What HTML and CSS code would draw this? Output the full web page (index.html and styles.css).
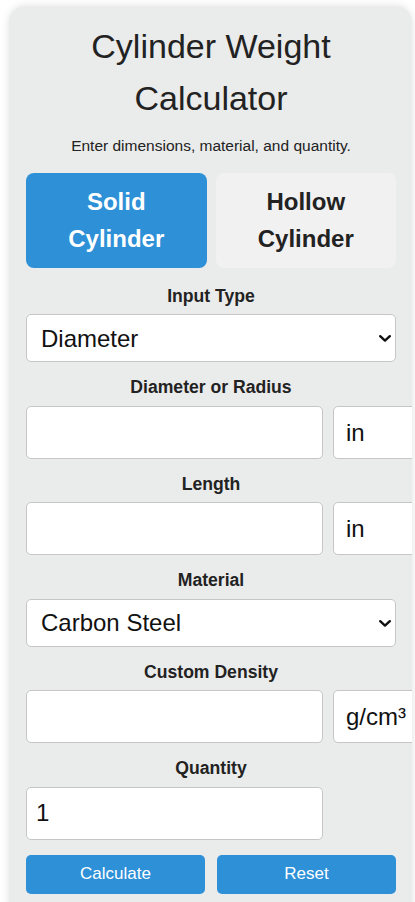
FILE: index.html
```html
<!DOCTYPE html>
<html lang="en">
<head>
<meta charset="utf-8">
<meta name="viewport" content="width=device-width, initial-scale=1">
<title>Cylinder Weight Calculator</title>
<link rel="stylesheet" href="styles.css">
</head>
<body>
<div class="page">
  <div class="card">
    <h1 class="title">Cylinder Weight Calculator</h1>
    <p class="subtitle">Enter dimensions, material, and quantity.</p>

    <div class="toggle">
      <button class="toggle-btn active" type="button">Solid Cylinder</button>
      <button class="toggle-btn" type="button">Hollow Cylinder</button>
    </div>

    <div class="group">
      <label class="field-label">Input Type</label>
      <div class="select-wrap">
        <select class="select">
          <option>Diameter</option>
          <option>Radius</option>
        </select>
        <svg class="chevron" width="12" height="7" viewBox="0 0 12 7"><path d="M1.2 1.2 L6 5.6 L10.8 1.2" fill="none" stroke="#111" stroke-width="2.4" stroke-linecap="round" stroke-linejoin="round"/></svg>
      </div>
    </div>

    <div class="group">
      <label class="field-label">Diameter or Radius</label>
      <div class="row">
        <input class="input" type="text">
        <select class="unit"><option>in</option><option>mm</option></select>
      </div>
    </div>

    <div class="group">
      <label class="field-label">Length</label>
      <div class="row">
        <input class="input" type="text">
        <select class="unit"><option>in</option><option>mm</option></select>
      </div>
    </div>

    <div class="group">
      <label class="field-label">Material</label>
      <div class="select-wrap">
        <select class="select">
          <option>Carbon Steel</option>
          <option>Aluminum</option>
        </select>
        <svg class="chevron" width="12" height="7" viewBox="0 0 12 7"><path d="M1.2 1.2 L6 5.6 L10.8 1.2" fill="none" stroke="#111" stroke-width="2.4" stroke-linecap="round" stroke-linejoin="round"/></svg>
      </div>
    </div>

    <div class="group">
      <label class="field-label">Custom Density</label>
      <div class="row">
        <input class="input" type="text">
        <select class="unit"><option>g/cm³</option><option>kg/m³</option></select>
      </div>
    </div>

    <div class="group">
      <label class="field-label">Quantity</label>
      <div class="row">
        <input class="input qty" type="text" value="1">
      </div>
    </div>

    <div class="actions">
      <button class="action" type="button">Calculate</button>
      <button class="action" type="button">Reset</button>
    </div>
  </div>
</div>
</body>
</html>
```

FILE: styles.css
```css
* {
  box-sizing: border-box;
}

html, body {
  margin: 0;
  padding: 0;
  background: #ffffff;
}

body {
  font-family: "Liberation Sans", Arial, sans-serif;
  color: #222222;
}

.page {
  padding: 6px 0 0 9px;
}

.card {
  width: 403px;
  background: #eaebeb;
  border-radius: 16px;
  box-shadow: 0 0 8px rgba(0, 0, 0, 0.12);
  padding: 14px 16px 30px 17px;
  overflow: hidden;
}

.title {
  margin: 0;
  font-size: 34px;
  line-height: 52px;
  font-weight: normal;
  text-align: center;
  color: #222222;
}

.subtitle {
  margin: 11px 0 0;
  font-size: 15.5px;
  line-height: 22px;
  text-align: center;
  color: #222222;
}

.toggle {
  margin-top: 16px;
  display: grid;
  grid-template-columns: 1fr 1fr;
  gap: 9px;
}

.toggle-btn {
  border: none;
  border-radius: 8px;
  padding: 11px 10px;
  font-family: inherit;
  font-size: 24px;
  font-weight: bold;
  line-height: 36.5px;
  background: #f1f1f1;
  color: #222222;
}

.toggle-btn.active {
  background: #2e90d7;
  color: #ffffff;
}

.group {
  margin-top: 16px;
}

.toggle + .group {
  margin-top: 18.5px;
}

.field-label {
  display: block;
  text-align: center;
  font-weight: bold;
  font-size: 17.6px;
  line-height: 19.5px;
  margin-bottom: 8px;
  color: #222222;
}

.select-wrap {
  position: relative;
}

.select {
  display: block;
  width: 100%;
  height: 48px;
  appearance: none;
  -webkit-appearance: none;
  border: 1px solid #c6c6c6;
  border-radius: 5px;
  background: #ffffff;
  padding: 0 30px 0 14px;
  font-family: inherit;
  font-size: 24px;
  color: #111111;
}

.chevron {
  position: absolute;
  right: 5px;
  top: 21px;
}

.row {
  display: flex;
  gap: 10px;
  width: 370px;
}

.input {
  display: block;
  width: 297px;
  min-width: 297px;
  max-width: 297px;
  flex: none;
  height: 53px;
  border: 1px solid #c6c6c6;
  border-radius: 5px;
  background: #ffffff;
  padding: 0 9px;
  font-family: inherit;
  font-size: 24px;
  color: #111111;
}

.unit {
  display: block;
  width: 110px;
  min-width: 110px;
  flex: none;
  height: 53px;
  appearance: none;
  -webkit-appearance: none;
  border: 1px solid #c6c6c6;
  border-radius: 5px;
  background: #ffffff;
  padding: 0 0 0 12px;
  font-family: inherit;
  font-size: 24px;
  color: #111111;
}

.actions {
  margin-top: 15px;
  display: grid;
  grid-template-columns: 1fr 1fr;
  gap: 12px;
}

.action {
  height: 39px;
  border: none;
  border-radius: 5px;
  background: #2e90d7;
  color: #ffffff;
  font-family: inherit;
  font-size: 17px;
}
```
